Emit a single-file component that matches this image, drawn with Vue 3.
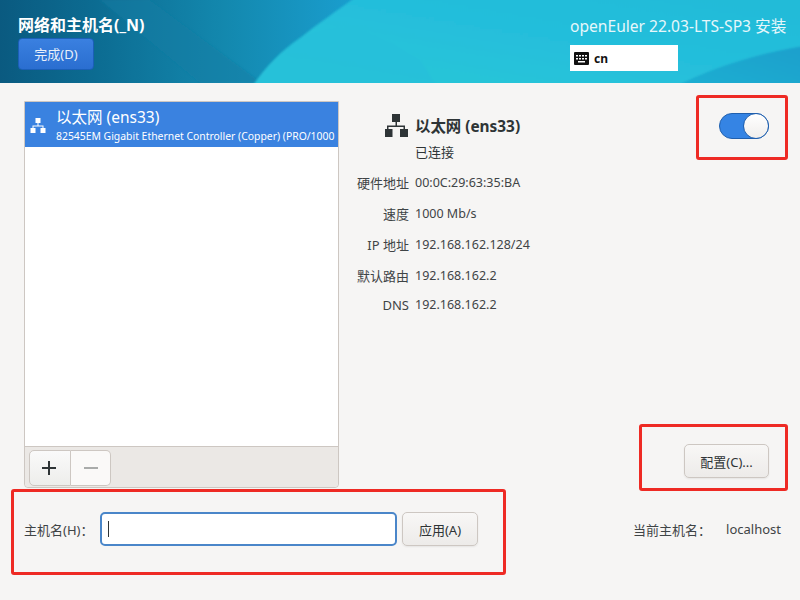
<template>
  <div class="page">
    <header class="top-bar">
      <svg class="top-bg" viewBox="0 0 800 83" preserveAspectRatio="none">
        <defs>
          <linearGradient id="bgGrad" x1="0" y1="0" x2="1" y2="0">
            <stop offset="0" stop-color="#0a5a80" />
            <stop offset="0.12" stop-color="#0c6c92" />
            <stop offset="0.28" stop-color="#1388ae" />
            <stop offset="0.45" stop-color="#1a9fd0" />
          </linearGradient>
          <linearGradient id="wedgeGrad" x1="0" y1="1" x2="1" y2="0">
            <stop offset="0" stop-color="#2bc9d6" />
            <stop offset="0.5" stop-color="#25bfdb" />
            <stop offset="1" stop-color="#21bad8" />
          </linearGradient>
          <linearGradient id="cornerGrad" x1="0" y1="1" x2="1" y2="0">
            <stop offset="0" stop-color="#1fb0d2" />
            <stop offset="1" stop-color="#1a9fcc" />
          </linearGradient>
          <filter id="soft" x="-5%" y="-5%" width="110%" height="110%">
            <feGaussianBlur stdDeviation="1.2" />
          </filter>
        </defs>
        <rect width="800" height="83" fill="url(#bgGrad)" />
        <g filter="url(#soft)">
          <path d="M100 0 L150 0 L262 83 L200 83 Z" fill="#0f7ea4" opacity="0.5" />
          <path d="M250 90 C266 66 280 52 300 38 C320 22 338 10 360 -6 L810 -6 L810 90 Z" fill="url(#wedgeGrad)" />
          <path d="M300 38 C340 20 370 30 420 60 L440 90 L250 90 C266 66 280 52 300 38 Z" fill="#26bfd9" opacity="0.8" />
          <path d="M668 90 C710 68 760 52 810 45 L810 90 Z" fill="url(#cornerGrad)" />
        </g>
      </svg>
      <div class="top-left">
        <h1 class="page-title">网络和主机名(_N)</h1>
        <button class="done-btn">完成(D)</button>
      </div>
      <div class="top-right">
        <div class="product">openEuler 22.03-LTS-SP3 安装</div>
        <div class="layout-box">
          <svg class="kb-icon" viewBox="0 0 15 13" width="15" height="13">
            <path fill-rule="evenodd" fill="#111" d="M1 0h13a1 1 0 0 1 1 1v11a1 1 0 0 1-1 1H1a1 1 0 0 1-1-1V1a1 1 0 0 1 1-1zM2 3v1.5h2V3zm3 0v1.5h2V3zm3 0v1.5h2V3zm3 0v1.5h2V3zM2 6v1.5h2V6zm3 0v1.5h2V6zm3 0v1.5h2V6zm3 0v1.5h2V6zM4 9v1.5h7V9z" />
          </svg>
          <span>cn</span>
        </div>
      </div>
    </header>

    <main class="content">
      <div class="panes">
        <section class="list-pane">
          <div class="device-list">
            <div class="device-row">
              <svg class="row-icon" viewBox="0 0 16 16" width="16" height="16">
                <path fill="#fff" d="M5.500 1h5v5h-5zM7.500 6h1v2.500h5V11h-1V9.500h-9V11h-1V8.500h5zM0.500 11h5v5h-5zM10.500 11h5v5h-5z" />
              </svg>
              <div class="row-text">
                <div class="row-name">以太网 (ens33)</div>
                <div class="row-desc">82545EM Gigabit Ethernet Controller (Copper) (PRO/1000</div>
              </div>
            </div>
          </div>
          <div class="list-toolbar">
            <div class="btn-group">
              <button class="tool-btn add">
                <svg viewBox="0 0 16 16" width="16" height="16"><path fill="#2e3436" d="M7 1h2v6h6v2H9v6H7V9H1V7h6z" /></svg>
              </button>
              <button class="tool-btn remove">
                <svg viewBox="0 0 16 16" width="16" height="16"><path fill="#a9abaa" d="M1 7h14v2H1z" /></svg>
              </button>
            </div>
          </div>
        </section>

        <section class="detail-pane">
          <div class="detail-top">
            <div class="info-grid">
              <div class="info-label head-icon">
                <svg viewBox="0 0 23 23" width="23" height="23">
                  <path fill="#2e3436" d="M7 0h8v8H7zM10.500 8h1.500v3.500h8V15h-1.500v-2H3.500v2H2v-3.500h8.500zM0 15h7.500v8H0zM15 15h8v8h-8z" />
                </svg>
              </div>
              <div class="info-title">以太网 (ens33)</div>
              <div></div>
              <div class="info-status">已连接</div>
              <template v-for="row in infoRows" :key="row.label">
                <div class="info-label">{{ row.label }}</div>
                <div class="info-value">{{ row.value }}</div>
              </template>
            </div>
            <div class="toggle"><span class="knob"></span></div>
          </div>
          <button class="plain-btn config-btn">配置(C)...</button>
        </section>
      </div>

      <div class="host-row">
        <label class="host-label">主机名(H)：</label>
        <div class="host-input"><span class="caret"></span></div>
        <button class="plain-btn apply-btn">应用(A)</button>
        <div class="current-host">
          <span>当前主机名：</span>
          <span class="host-value">localhost</span>
        </div>
      </div>
    </main>

    <div class="mark mark-toggle"></div>
    <div class="mark mark-config"></div>
    <div class="mark mark-host"></div>
  </div>
</template>

<script setup>
const infoRows = [
  { label: '硬件地址', value: '00:0C:29:63:35:BA' },
  { label: '速度', value: '1000 Mb/s' },
  { label: 'IP 地址', value: '192.168.162.128/24' },
  { label: '默认路由', value: '192.168.162.2' },
  { label: 'DNS', value: '192.168.162.2' }
]
</script>

<style>
html,
body {
  margin: 0;
  background: #f6f5f4;
}
</style>

<style scoped>
.page {
  position: relative;
  width: 800px;
  height: 600px;
  overflow: hidden;
  background: #f6f5f4;
  color: #2e3436;
  font-family: "Noto Sans", "Noto Sans CJK SC", sans-serif;
  font-size: 12.5px;
}

.top-bar {
  position: relative;
  height: 83px;
  box-sizing: border-box;
  display: flex;
  justify-content: space-between;
  padding: 16px 13px 0 18px;
  color: #fff;
}

.top-bg {
  position: absolute;
  left: 0;
  top: 0;
  width: 800px;
  height: 83px;
}

.top-left,
.top-right {
  position: relative;
}

.page-title {
  margin: 0 0 3px;
  font-size: 16px;
  line-height: 19px;
  font-weight: 700;
}

.done-btn {
  display: block;
  width: 76px;
  height: 32px;
  padding: 0 0 2px;
  border: 1px solid #1b5fb8;
  border-radius: 4px;
  background: linear-gradient(#3a80e0, #2a6ed0);
  color: #e8f0fa;
  font: inherit;
  font-size: 13px;
}

.top-right {
  width: 217px;
}

.product {
  height: 20px;
  margin-bottom: 9px;
  font-size: 15.6px;
  line-height: 20px;
  color: #e6f7fb;
  white-space: nowrap;
}

.layout-box {
  display: flex;
  align-items: center;
  gap: 5px;
  width: 108px;
  height: 26px;
  box-sizing: border-box;
  padding-left: 4px;
  background: #fff;
  color: #111;
  font-size: 12px;
  font-weight: 700;
}

.content {
  padding: 18px 19px 0 24px;
}

.panes {
  display: flex;
  height: 387px;
}

.list-pane {
  width: 315px;
  flex: none;
  display: flex;
  flex-direction: column;
  box-sizing: border-box;
  border: 1px solid #cdc7c2;
  border-radius: 0 0 4px 4px;
}

.device-list {
  flex: 1;
  background: #fff;
}

.device-row {
  display: flex;
  align-items: center;
  height: 45px;
  background: #3a82e0;
  color: #fff;
}

.row-icon {
  flex: none;
  margin: 0 10px 0 5px;
}

.row-text {
  min-width: 0;
  white-space: nowrap;
}

.row-name {
  font-size: 15.5px;
  line-height: 20px;
}

.row-desc {
  font-size: 10.4px;
  line-height: 14px;
  margin-top: 2px;
}

.list-toolbar {
  height: 41px;
  box-sizing: border-box;
  padding: 3px 4px;
  background: #ebe8e5;
  border-top: 1px solid #cdc7c2;
  border-radius: 0 0 4px 4px;
}

.btn-group {
  display: flex;
  width: 82px;
  height: 36px;
}

.tool-btn {
  display: flex;
  align-items: center;
  justify-content: center;
  padding: 0;
  border: 1px solid #cdc7c2;
}

.tool-btn.add {
  width: 42px;
  padding-right: 2px;
  background: linear-gradient(#fafafa, #ededeb);
  border-radius: 5px 0 0 5px;
}

.tool-btn.remove {
  width: 40px;
  background: #faf9f8;
  border-left: none;
  border-radius: 0 5px 5px 0;
}

.detail-pane {
  flex: 1;
  display: flex;
  flex-direction: column;
  align-items: flex-end;
  padding: 0 12px 10px 18px;
}

.detail-top {
  align-self: stretch;
  display: flex;
  justify-content: space-between;
  align-items: flex-start;
}

.info-grid {
  display: grid;
  grid-template-columns: 52px auto;
  grid-template-rows: 31px 26px 31px 31px 31px 31px 27px;
  column-gap: 6px;
  align-items: center;
  margin-top: 9px;
}

.info-label {
  font-size: 13px;
  text-align: right;
  white-space: nowrap;
  color: #3f4446;
}

.head-icon {
  display: flex;
  justify-content: flex-end;
  margin-right: 1px;
}

.info-title {
  font-size: 15.4px;
  font-weight: 700;
  white-space: nowrap;
}

.info-status {
  margin-top: 1px;
  font-size: 13px;
  align-self: start;
}

.info-value {
  white-space: nowrap;
  color: #3f4446;
}

.toggle {
  position: relative;
  width: 50px;
  height: 26px;
  margin-top: 12px;
  box-sizing: border-box;
  border: 1px solid #1f5fae;
  border-radius: 13px;
  background: #3584e4;
}

.knob {
  position: absolute;
  right: -1px;
  top: -1px;
  width: 26px;
  height: 26px;
  box-sizing: border-box;
  border: 1px solid #1f5fae;
  border-radius: 50%;
  background: linear-gradient(#fff, #f0eeec);
}

.plain-btn {
  height: 34px;
  padding: 0;
  border: 1px solid #cdc7c2;
  border-radius: 5px;
  background: linear-gradient(#f8f7f6, #edebe9);
  box-shadow: 0 1px 2px rgba(0, 0, 0, 0.07);
  color: #2e3436;
  font: inherit;
  font-size: 13px;
}

.config-btn {
  width: 85px;
  margin-top: auto;
}

.host-row {
  display: flex;
  align-items: center;
  height: 34px;
  margin-top: 24px;
  font-size: 13px;
}

.host-label {
  width: 76px;
  flex: none;
  white-space: nowrap;
  color: #3f4446;
}

.host-input {
  width: 297px;
  height: 34px;
  flex: none;
  display: flex;
  align-items: center;
  box-sizing: border-box;
  padding-left: 6px;
  border: 2px solid #4a86c9;
  border-radius: 5px;
  background: #fff;
}

.caret {
  width: 1px;
  height: 16px;
  background: #2e3436;
}

.apply-btn {
  width: 76px;
  margin-left: 5px;
  flex: none;
}

.current-host {
  display: flex;
  margin-left: auto;
  white-space: nowrap;
  color: #3f4446;
}

.host-value {
  margin-left: 15px;
}

.mark {
  position: absolute;
  box-sizing: border-box;
  border: 3px solid #ee2a24;
  border-radius: 3px;
}

.mark-toggle {
  left: 696px;
  top: 95px;
  width: 92px;
  height: 65px;
}

.mark-config {
  left: 639px;
  top: 424px;
  width: 149px;
  height: 67px;
}

.mark-host {
  left: 11px;
  top: 489px;
  width: 495px;
  height: 86px;
}
</style>
